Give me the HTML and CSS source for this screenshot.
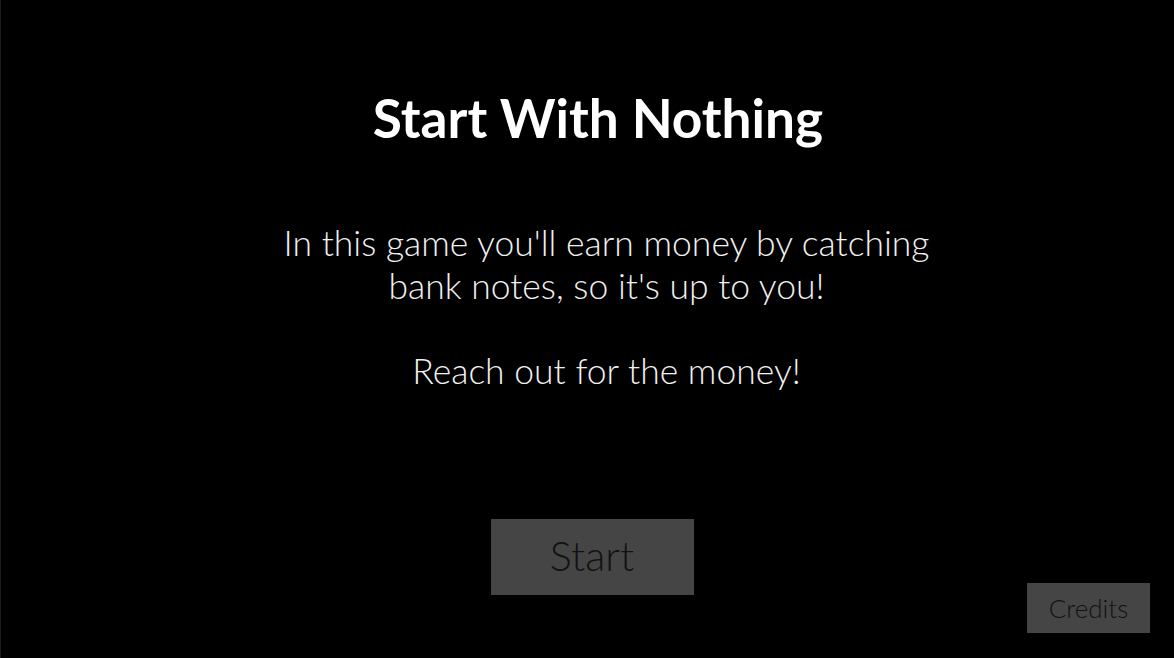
FILE: index.html
```html
<!DOCTYPE html>
<html lang="en">
<head>
<meta charset="utf-8">
<title>Start With Nothing</title>
<link rel="stylesheet" href="styles.css">
</head>
<body>
<main class="screen">
  <h1 class="title">Start With Nothing</h1>
  <p class="intro">In this game you'll earn money by catching<br>bank notes, so it's up to you!<br><br>Reach out for the money!</p>
  <button class="btn btn-start">Start</button>
  <button class="btn btn-credits">Credits</button>
</main>
</body>
</html>
```
FILE: styles.css
```css
html, body {
  margin: 0;
  padding: 0;
  background: #000;
}
body {
  font-family: Lato, "Open Sans", sans-serif;
  color: #fff;
}
.screen {
  position: relative;
  width: 1174px;
  height: 658px;
  box-sizing: border-box;
  border-left: 1px solid #1c1c1c;
  display: flex;
  flex-direction: column;
  align-items: center;
  overflow: hidden;
}
.title {
  margin: 85px 0 0 21px;
  font-size: 53.2px;
  line-height: 64px;
  font-weight: 700;
}
.intro {
  margin: 73px 0 0 38px;
  font-size: 35.5px;
  line-height: 42.6px;
  font-weight: 300;
  text-align: center;
  color: #f0f0f0;
}
.btn {
  font-family: Lato, "Open Sans", sans-serif;
  font-weight: 300;
  background: #454545;
  color: #121212;
  border: none;
  padding: 0;
  cursor: pointer;
}
.btn-start {
  margin: 127px 0 0 9px;
  width: 203px;
  height: 76px;
  padding-bottom: 4px;
  font-size: 41.5px;
}
.btn-credits {
  position: absolute;
  right: 24px;
  bottom: 25px;
  width: 123px;
  height: 50px;
  font-size: 26px;
}
```
